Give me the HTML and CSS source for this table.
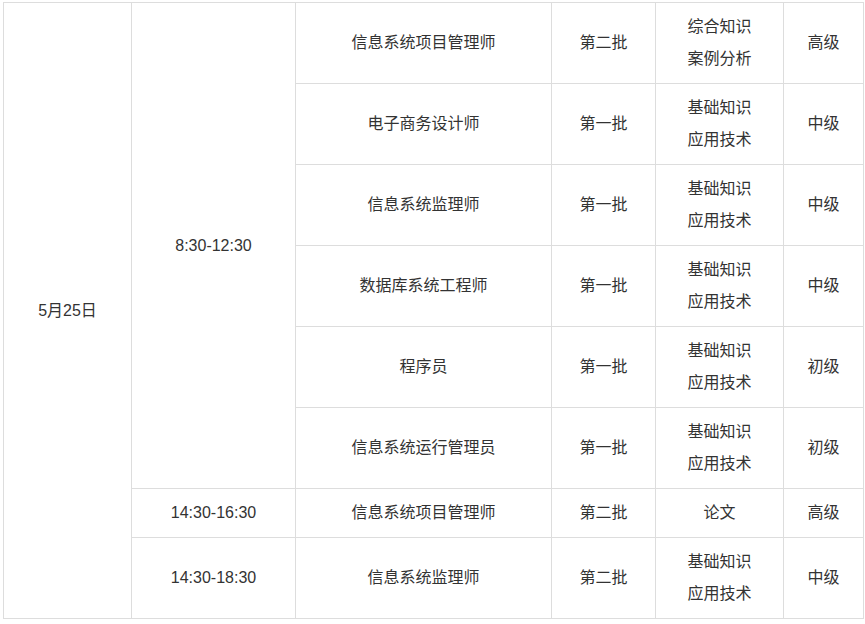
FILE: index.html
```html
<!DOCTYPE html>
<html lang="zh-CN">
<head>
<meta charset="utf-8">
<title>考试安排</title>
<link rel="stylesheet" href="styles.css">
</head>
<body>
<table class="schedule">
  <colgroup>
    <col class="c-date">
    <col class="c-time">
    <col class="c-name">
    <col class="c-batch">
    <col class="c-subject">
    <col class="c-level">
  </colgroup>
  <tbody>
    <tr>
      <td rowspan="8">5月25日</td>
      <td rowspan="6">8:30-12:30</td>
      <td>信息系统项目管理师</td>
      <td>第二批</td>
      <td>综合知识<br>案例分析</td>
      <td>高级</td>
    </tr>
    <tr>
      <td>电子商务设计师</td>
      <td>第一批</td>
      <td>基础知识<br>应用技术</td>
      <td>中级</td>
    </tr>
    <tr>
      <td>信息系统监理师</td>
      <td>第一批</td>
      <td>基础知识<br>应用技术</td>
      <td>中级</td>
    </tr>
    <tr>
      <td>数据库系统工程师</td>
      <td>第一批</td>
      <td>基础知识<br>应用技术</td>
      <td>中级</td>
    </tr>
    <tr>
      <td>程序员</td>
      <td>第一批</td>
      <td>基础知识<br>应用技术</td>
      <td>初级</td>
    </tr>
    <tr>
      <td>信息系统运行管理员</td>
      <td>第一批</td>
      <td>基础知识<br>应用技术</td>
      <td>初级</td>
    </tr>
    <tr>
      <td>14:30-16:30</td>
      <td>信息系统项目管理师</td>
      <td>第二批</td>
      <td>论文</td>
      <td>高级</td>
    </tr>
    <tr>
      <td>14:30-18:30</td>
      <td>信息系统监理师</td>
      <td>第二批</td>
      <td>基础知识<br>应用技术</td>
      <td>中级</td>
    </tr>
  </tbody>
</table>
</body>
</html>
```

FILE: styles.css
```css
html, body {
  margin: 0;
  padding: 0;
  background: #fff;
}

body {
  padding: 2px 0 0 3px;
  font-family: "Liberation Sans", Arial, "Noto Sans CJK SC", sans-serif;
  font-size: 16px;
  color: #333;
}

.schedule {
  border-collapse: collapse;
  table-layout: fixed;
  width: 860px;
}

.c-date { width: 128px; }
.c-time { width: 164px; }
.c-name { width: 256px; }
.c-batch { width: 104px; }
.c-subject { width: 128px; }
.c-level { width: 80px; }

.schedule td {
  border: 1px solid #ddd;
  padding: 8px 0;
  line-height: 32px;
  text-align: center;
  vertical-align: middle;
}
```
